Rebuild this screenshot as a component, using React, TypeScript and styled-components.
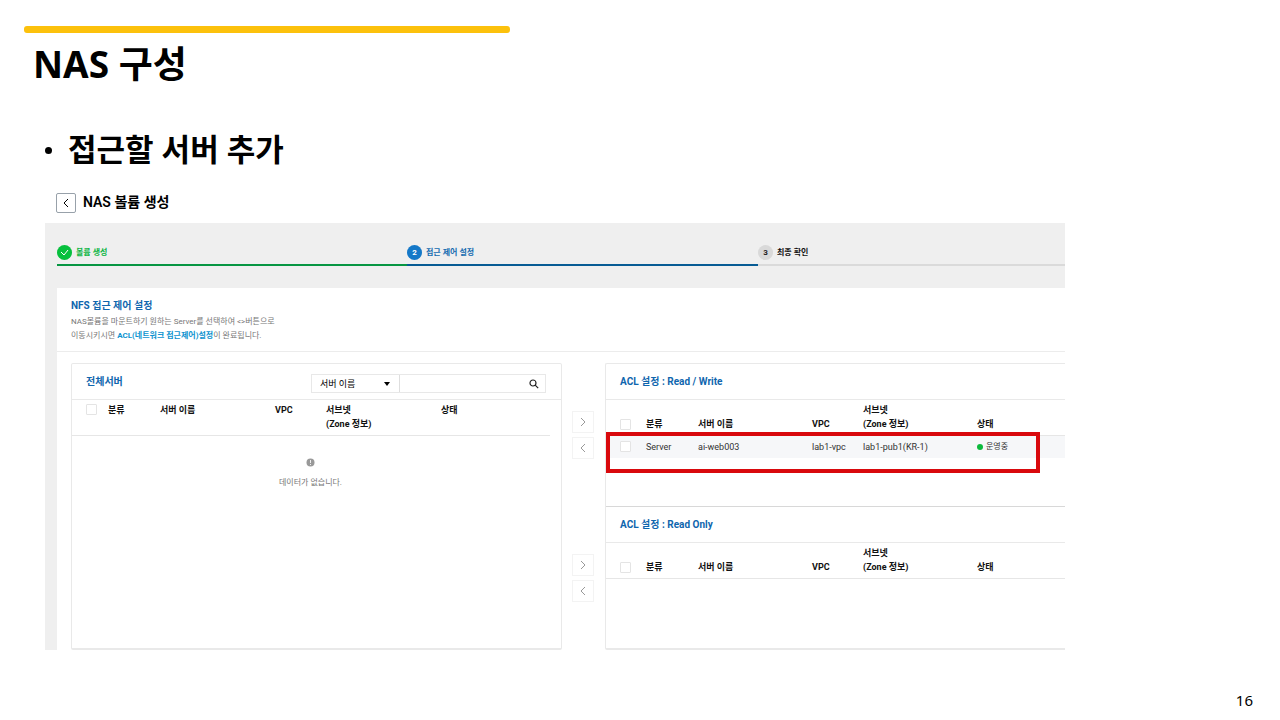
import React from "react";
import styled, { createGlobalStyle } from "styled-components";

const GlobalStyle = createGlobalStyle`
  *, *::before, *::after { box-sizing: border-box; }
  body { margin: 0; background: #fff; color: #000; }
  button, input, select { font: inherit; color: inherit; }
  h1, h2, h3, h4, p, ul, ol { margin: 0; padding: 0; }
  ul, ol { list-style: none; }
`;

const slideFont = `"Noto Sans", "Noto Sans CJK KR", sans-serif`;
const consoleFont = `Roboto, "Noto Sans CJK KR", sans-serif`;

const Slide = styled.main`
  display: flex;
  flex-direction: column;
  min-height: 100vh;
  padding-top: 26px;
  font-family: ${slideFont};
`;

const AccentBar = styled.div`
  width: 38%;
  height: 7px;
  margin-left: 24px;
  border-radius: 3px;
  background: #fcc10c;
`;

const SlideTitle = styled.h1`
  margin: 5px 0 0 33px;
  font-size: 37px;
  line-height: 52px;
  font-weight: 700;
`;

const Bullets = styled.ul`
  margin: 35px 0 0 45px;
`;

const Bullet = styled.li`
  display: flex;
  align-items: center;
  gap: 16px;
  font-size: 31px;
  line-height: 48px;
  font-weight: 700;

  &::before {
    content: "";
    width: 7px;
    height: 7px;
    margin-top: 2px;
    border-radius: 50%;
    background: #000;
  }
`;

const Capture = styled.section`
  display: flex;
  flex-direction: column;
  margin: 19px 215px 0 45px;
  font-family: ${consoleFont};
  font-size: 9px;
  line-height: 14px;
`;

const CaptureHeader = styled.header`
  display: flex;
  align-items: center;
  gap: 7px;
  height: 22px;
  margin: 0 0 9px 11px;
`;

const BackButton = styled.button`
  display: grid;
  place-items: center;
  width: 20px;
  height: 20px;
  padding: 0;
  border: 1px solid #98a1aa;
  border-radius: 2px;
  background: #fff;
`;

const CaptureTitle = styled.h2`
  font-size: 14px;
  line-height: 20px;
  padding-bottom: 2px;
  font-weight: 600;
`;

const Canvas = styled.div`
  padding: 22px 0 0 12px;
  background: #efefef;
`;

const Steps = styled.ol`
  display: grid;
  grid-template-columns: 350fr 351fr 307fr;
  margin-bottom: 22px;
`;

const Step = styled.li<{ $text: string; $line: string }>`
  display: flex;
  align-items: flex-start;
  gap: 4px;
  height: 21px;
  border-bottom: 2px solid ${(p) => p.$line};
  color: ${(p) => p.$text};
  font-size: 8px;
  font-weight: 700;
  line-height: 16px;
`;

const StepBadge = styled.span<{ $fill: string; $ink: string }>`
  display: grid;
  place-items: center;
  width: 15px;
  height: 15px;
  border-radius: 50%;
  background: ${(p) => p.$fill};
  color: ${(p) => p.$ink};
  font-size: 8px;
  line-height: 15px;
`;

const Card = styled.div`
  background: #fff;
`;

const Intro = styled.div`
  padding: 11px 14px 8px;
  border-bottom: 1px solid #ececec;
`;

const IntroTitle = styled.h3`
  margin-bottom: 2px;
  color: #0f66ae;
  font-size: 10px;
  line-height: 14px;
  font-weight: 700;
`;

const IntroText = styled.p`
  color: #777;
  font-size: 8px;
  line-height: 14px;

  strong { color: #0c93cf; }
`;

const Workspace = styled.div`
  display: grid;
  grid-template-columns: minmax(0, 491fr) 43px minmax(0, 460fr);
  padding: 11px 0 0 14px;
`;

const Panel = styled.section`
  border: 1px solid #e9e9e9;
  border-bottom-width: 2px;
  border-radius: 2px;
`;

const AclColumn = styled.div`
  position: relative;
  border: 1px solid #e9e9e9;
  border-width: 1px 0 2px 1px;
  border-radius: 2px 0 0 2px;
`;

const AclPanel = styled.section`
  min-height: 142px;

  & + & { border-top: 1px solid #d8d8d8; }
`;

const PanelHeader = styled.div`
  display: flex;
  justify-content: space-between;
  align-items: center;
  height: 36px;
  padding: 0 14px;
  border-bottom: 1px solid #e9e9e9;
`;

const PanelTitle = styled.h4`
  color: #0f66ae;
  font-size: 10px;
  line-height: 14px;
  font-weight: 700;
`;

const Search = styled.form`
  display: flex;
  width: 235px;
  height: 19px;
  margin: 4px 1px 0 0;
  border: 1px solid #e8e8e8;
`;

const SelectBox = styled.span`
  display: flex;
  position: relative;
  width: 88px;
  border-right: 1px solid #dedede;

  svg { position: absolute; right: 9px; top: 7px; pointer-events: none; }
`;

const Select = styled.select`
  appearance: none;
  width: 100%;
  padding: 0 8px;
  border: 0;
  background: transparent;
`;

const SearchInput = styled.input`
  flex: 1;
  min-width: 0;
  padding: 0 6px;
  border: 0;
  background: transparent;
`;

const SearchButton = styled.button`
  display: grid;
  place-items: center;
  width: 22px;
  padding: 0;
  border: 0;
  background: transparent;
`;

const Table = styled.table<{ $inset?: boolean }>`
  width: ${(p) => (p.$inset ? "calc(100% - 11px)" : "100%")};
  border-collapse: collapse;
  table-layout: fixed;

  th, td { padding: 0; text-align: left; }
  th {
    height: 35px;
    padding: 3px 0 4px;
    border-bottom: 1px solid #e6e6e6;
    color: #111;
    font-weight: 700;
    vertical-align: ${(p) => (p.$inset ? "top" : "bottom")};
  }
  td { height: 22px; background: #f6f7f9; color: #333; }
  th:first-child, td:first-child { padding-left: 14px; }
`;

const Checkbox = styled.input`
  appearance: none;
  display: block;
  width: 11px;
  height: 11px;
  margin: 1px 0;
  border: 1px solid #e4e4e4;
  border-radius: 1px;
  background: #fff;
`;

const Empty = styled.div`
  display: flex;
  flex-direction: column;
  align-items: center;
  gap: 9px;
  padding: 22px 0 0;
  margin-right: 12px;
  color: #777;
  font-size: 8px;
`;

const Moves = styled.div`
  display: flex;
  flex-direction: column;
  gap: 95px;
  padding: 48px 0 0 10px;
`;

const MoveGroup = styled.div`
  display: flex;
  flex-direction: column;
  gap: 4px;
`;

const MoveButton = styled.button`
  display: grid;
  place-items: center;
  width: 22px;
  height: 22px;
  padding: 0;
  border: 1px solid #f3f3f3;
  background: #fff;
  color: #999;
`;

const Status = styled.span`
  display: flex;
  align-items: center;
  gap: 3px;
  font-size: 8px;

  &::before {
    content: "";
    width: 6px;
    height: 6px;
    border-radius: 50%;
    background: #0dba3d;
  }
`;

const Highlight = styled.div`
  position: absolute;
  top: 68px;
  left: 0;
  width: 434px;
  height: 41px;
  border: 4px solid #d9090d;
  pointer-events: none;
`;

const PageNumber = styled.footer`
  margin: auto 27px 9px auto;
  font-size: 15px;
  line-height: 22px;
`;

const Chevron = ({ to }: { to: "left" | "right" }) => (
  <svg width="10" height="10" viewBox="0 0 10 10" fill="none" stroke="currentColor" aria-hidden="true">
    <path d={to === "left" ? "M7 1 3 5l4 4" : "M3 1l4 4-4 4"} />
  </svg>
);

type ServerRow = { kind: string; name: string; vpc: string; subnet: string; status: string };

function ServerTable({ widths, rows = [], inset, label }: { widths: number[]; rows?: ServerRow[]; inset?: boolean; label: string }) {
  return (
    <Table $inset={inset} aria-label={label}>
      <colgroup>
        {widths.map((width, i) => <col key={i} width={width} />)}
        <col />
      </colgroup>
      <thead>
        <tr>
          <th><Checkbox type="checkbox" aria-label={`${label} 전체 선택`} /></th>
          <th>분류</th>
          <th>서버 이름</th>
          <th>VPC</th>
          <th>서브넷<br />(Zone 정보)</th>
          <th>상태</th>
        </tr>
      </thead>
      {rows.length > 0 && (
        <tbody>
          {rows.map((row) => (
            <tr key={row.name}>
              <td><Checkbox type="checkbox" aria-label={`${row.name} 선택`} /></td>
              <td>{row.kind}</td>
              <td>{row.name}</td>
              <td>{row.vpc}</td>
              <td>{row.subnet}</td>
              <td><Status>{row.status}</Status></td>
            </tr>
          ))}
        </tbody>
      )}
    </Table>
  );
}

const MovePair = ({ target }: { target: string }) => (
  <MoveGroup>
    <MoveButton type="button" aria-label={`${target} 추가`}><Chevron to="right" /></MoveButton>
    <MoveButton type="button" aria-label={`${target} 제거`}><Chevron to="left" /></MoveButton>
  </MoveGroup>
);

const servers: ServerRow[] = [
  { kind: "Server", name: "ai-web003", vpc: "lab1-vpc", subnet: "lab1-pub1(KR-1)", status: "운영중" },
];
const allColumns = [36, 52, 115, 51, 115];
const aclColumns = [40, 52, 114, 51, 114];

export default function App() {
  return (
    <Slide lang="ko">
      <GlobalStyle />
      <AccentBar />
      <SlideTitle>NAS 구성</SlideTitle>
      <Bullets><Bullet>접근할 서버 추가</Bullet></Bullets>

      <Capture>
        <CaptureHeader>
          <BackButton type="button" aria-label="뒤로"><Chevron to="left" /></BackButton>
          <CaptureTitle>NAS 볼륨 생성</CaptureTitle>
        </CaptureHeader>
        <Canvas>
          <Steps>
            <Step $text="#0cb544" $line="#079642">
              <StepBadge $fill="#06c03d" $ink="#fff">
                <svg width="9" height="7" viewBox="0 0 9 7" fill="none" stroke="currentColor" aria-hidden="true"><path d="M1 3l3 3 4-5" /></svg>
              </StepBadge>
              볼륨 생성
            </Step>
            <Step $text="#146bb0" $line="#075b94">
              <StepBadge $fill="#1478c8" $ink="#fff">2</StepBadge>
              접근 제어 설정
            </Step>
            <Step $text="#111" $line="#dadada">
              <StepBadge $fill="#d9d9d9" $ink="#222">3</StepBadge>
              최종 확인
            </Step>
          </Steps>
          <Card>
            <Intro>
              <IntroTitle>NFS 접근 제어 설정</IntroTitle>
              <IntroText>
                NAS볼륨을 마운트하기 원하는 Server를 선택하여 &lt;&gt;버튼으로<br />
                이동시키시면 <strong>ACL(네트워크 접근제어)설정</strong>이 완료됩니다.
              </IntroText>
            </Intro>
            <Workspace>
              <Panel>
                <PanelHeader>
                  <PanelTitle>전체서버</PanelTitle>
                  <Search role="search" onSubmit={(e) => e.preventDefault()}>
                    <SelectBox>
                      <Select aria-label="검색 기준"><option>서버 이름</option></Select>
                      <svg width="6" height="4" viewBox="0 0 6 4" aria-hidden="true"><path d="M0 0h6L3 4z" /></svg>
                    </SelectBox>
                    <SearchInput type="text" aria-label="검색어" />
                    <SearchButton type="submit" aria-label="검색">
                      <svg width="10" height="10" viewBox="0 0 10 10" fill="none" stroke="#222" strokeWidth="1.2" aria-hidden="true">
                        <circle cx="4" cy="4" r="3" /><path d="M6.2 6.2l3 3" />
                      </svg>
                    </SearchButton>
                  </Search>
                </PanelHeader>
                <ServerTable widths={allColumns} inset label="전체서버" />
                <Empty>
                  <svg width="9" height="9" viewBox="0 0 9 9" aria-hidden="true">
                    <circle cx="4.500" cy="4.500" r="4" fill="#999" /><path d="M4.500 2v3M4.500 6v1" stroke="#eee" />
                  </svg>
                  <p>데이터가 없습니다.</p>
                </Empty>
              </Panel>
              <Moves>
                <MovePair target="Read / Write" />
                <MovePair target="Read Only" />
              </Moves>
              <AclColumn>
                <AclPanel>
                  <PanelHeader><PanelTitle>ACL 설정 : Read / Write</PanelTitle></PanelHeader>
                  <ServerTable widths={aclColumns} rows={servers} label="Read / Write" />
                </AclPanel>
                <AclPanel>
                  <PanelHeader><PanelTitle>ACL 설정 : Read Only</PanelTitle></PanelHeader>
                  <ServerTable widths={aclColumns} label="Read Only" />
                </AclPanel>
                <Highlight />
              </AclColumn>
            </Workspace>
          </Card>
        </Canvas>
      </Capture>
      <PageNumber>16</PageNumber>
    </Slide>
  );
}
